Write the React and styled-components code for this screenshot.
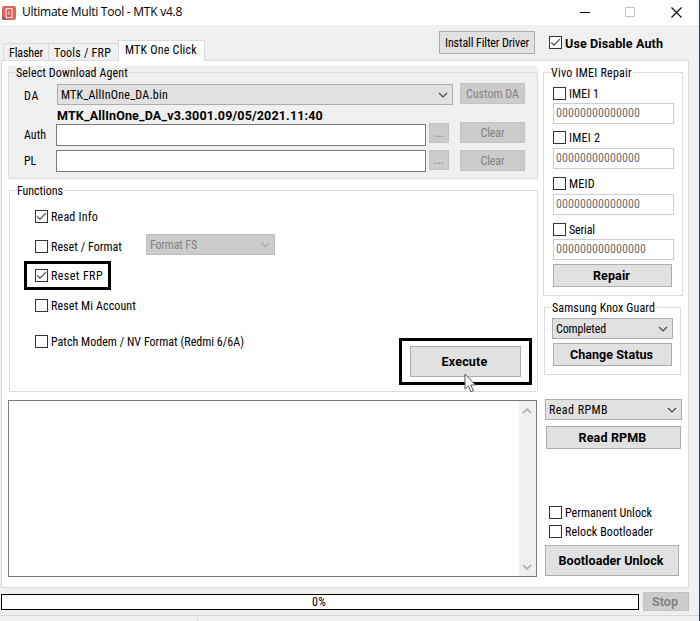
import React from 'react';
import styled, { createGlobalStyle, css } from 'styled-components';

const GlobalStyle = createGlobalStyle`
  * { box-sizing: border-box; }
  body { margin: 0; background: #f0f0f0; overflow: hidden; }
  button, input, fieldset { font: inherit; }
`;

const Window = styled.div`
  width: 700px;
  height: 621px;
  display: flex;
  flex-direction: column;
  overflow: hidden;
  background: #f0f0f0;
  border-right: 1px solid #1d4a63;
  font-family: "Roboto Condensed", Roboto, "Liberation Sans", sans-serif;
  font-size: 12px;
  line-height: 13px;
  color: #000;
  white-space: nowrap;
`;

const Text = styled.span`
  letter-spacing: ${(p) => p.$ls || 0}px;
  ${(p) => p.$bold && css`font-family: Roboto, "Liberation Sans", sans-serif; font-weight: 700; font-size: 12.5px;`}
`;

const TitleBar = styled.header`
  flex: none;
  height: 25px;
  display: flex;
  align-items: center;
  background: #fff;
  padding-left: 2px;
`;

const Title = styled.h1`
  flex: 1;
  margin: 0 0 1px 6px;
  font: 400 12px/16px "Open Sans", "Noto Sans", sans-serif;
  letter-spacing: -0.25px;
`;

const WindowControls = styled.div`
  display: flex;
  align-items: center;
  gap: 35px;
  padding-right: 17px;
  svg { display: block; }
`;

const HeaderRow = styled.div`
  flex: none;
  height: 36px;
  display: flex;
  align-items: flex-start;
`;

const Tabs = styled.nav`
  display: flex;
  align-items: flex-end;
  height: 36px;
  width: 439px;
  padding-left: 3px;
`;

const Tab = styled.div`
  position: relative;
  width: ${(p) => p.$width}px;
  height: ${(p) => (p.$active ? 21 : 18)}px;
  padding: ${(p) => (p.$active ? '3px 0 0 6px' : '3px 0 0 5px')};
  border: 1px solid #d9dcde;
  border-bottom: 0;
  margin-right: -1px;
  background: ${(p) => (p.$active ? '#fff' : '#f0f0f0')};
  z-index: ${(p) => (p.$active ? 2 : 0)};
`;

const Button = styled.button`
  flex: none;
  width: ${(p) => p.$width}px;
  height: ${(p) => p.$height || 23}px;
  margin: ${(p) => p.$margin || 0};
  padding: ${(p) => (p.$strong ? '0 2px 0 0' : '1px 0 0')};
  border: 1px solid #adadad;
  border-radius: 0;
  background: #e1e1e1;
  color: #000;
  line-height: 13px;
  text-align: center;
  &:disabled {
    background: #ccc;
    border-color: #c2c2c2;
    color: #838383;
  }
`;

const CheckLabel = styled.label`
  display: flex;
  align-items: center;
  height: 13px;
  gap: 3px;
  margin: ${(p) => p.$margin || 0};
  ${Text} { margin-top: 2px; }
`;

const CheckSquare = styled.span`
  flex: none;
  width: 13px;
  height: 13px;
  border: 1px solid #333;
  background: #fff;
  svg { display: block; }
`;

const Page = styled.main`
  position: relative;
  flex: none;
  display: flex;
  width: 688px;
  height: 528px;
  margin: -1px 0 0 1px;
  background: #fff;
  border: 1px solid #dcdcdc;
`;

const LeftColumn = styled.div`
  width: 541px;
  padding: 5px 0 0 6px;
  display: flex;
  flex-direction: column;
`;

const RightColumn = styled.div`
  width: 145px;
  padding-top: 5px;
`;

const Shade = styled.div`
  width: 530px;
  height: 113px;
  background: #f0f0f0;
`;

const Group = styled.fieldset`
  width: ${(p) => p.$width}px;
  height: ${(p) => p.$height}px;
  min-width: 0;
  margin: ${(p) => p.$margin || 0};
  padding: 0 0 0 7px;
  border: 1px solid #dcdcdc;
`;

const Legend = styled.legend`
  height: 13px;
  padding: 1px 1px 0 0;
`;

const AgentRow = styled.div`
  display: flex;
  align-items: flex-start;
  margin: ${(p) => p.$top}px 0 0 8px;
`;

const FieldName = styled.span`
  width: ${(p) => p.$width}px;
  padding-top: ${(p) => p.$drop || 5}px;
`;

const VersionLine = styled.div`
  height: 19px;
  padding: 4px 0 0 41px;
`;

const PathInput = styled.input`
  width: 370px;
  height: 22px;
  border: 1px solid #7a7a7a;
  background: #fff;
  border-radius: 0;
  outline: 0;
`;

const Combo = styled.div`
  flex: none;
  display: flex;
  align-items: center;
  justify-content: space-between;
  width: ${(p) => p.$width}px;
  height: 21px;
  margin: ${(p) => p.$margin || 0};
  padding: 1px 4px 0 3px;
  border: 1px solid ${(p) => (p.$disabled ? '#bfbfbf' : '#adadad')};
  background: ${(p) => (p.$disabled ? '#ccc' : '#e1e1e1')};
  color: ${(p) => (p.$disabled ? '#838383' : '#000')};
  svg { display: block; }
  ${Text} { margin-top: 1px; }
`;

const FunctionRow = styled.div`
  display: flex;
  align-items: center;
  height: 13px;
  margin: ${(p) => p.$top}px 0 0 18px;
`;

const Highlighted = styled.div`
  position: relative;
  width: ${(p) => p.$width}px;
  margin: ${(p) => p.$margin || 0};
`;

const HighlightFrame = styled.div`
  position: absolute;
  inset: -8px -11px;
  border: 3px solid #000;
  pointer-events: none;
`;

const Pointer = styled.svg`
  position: absolute;
  left: 54px;
  top: 27px;
`;

const Memo = styled.div`
  display: flex;
  justify-content: flex-end;
  width: 529px;
  height: 177px;
  margin-top: 8px;
  border: 1px solid #7a7a7a;
  background: #fff;
`;

const ScrollTrack = styled.div`
  width: 17px;
  display: flex;
  flex-direction: column;
  align-items: center;
  justify-content: space-between;
  padding: 7px 1px 6px 0;
  background: #f0f0f0;
  svg { display: block; }
`;

const IdInput = styled.div`
  width: 121px;
  height: 21px;
  margin: ${(p) => p.$top}px 0 0 2px;
  padding: 3px 0 0 2px;
  border: 1px solid #ccc;
  color: #6d6d6d;
`;

const Footer = styled.footer`
  flex: 1;
  display: flex;
  flex-direction: column;
`;

const ProgressRow = styled.div`
  display: flex;
  align-items: flex-start;
  gap: 4px;
  height: 27px;
  padding: 4px 0 0 1px;
`;

const Progress = styled.div`
  width: 638px;
  height: 16px;
  margin-top: 2px;
  padding-right: 2px;
  border: 1px solid #000;
  background: #fff;
  text-align: center;
  line-height: 15px;
`;

const StatusBar = styled.div`
  flex: 1;
  border-top: 1px solid #d7d7d7;
  padding-top: 2px;
`;

const StatusPanel = styled.div`
  width: 198px;
  height: 8px;
  border-right: 1px solid #d0d0d0;
`;

function Chevron({ up, color = '#444', width = 1.1 }) {
  return (
    <svg width="10" height="6" viewBox="0 0 10 6" fill="none" stroke={color} strokeWidth={width}>
      <path d={up ? 'M1 5 5 1 9 5' : 'M1 1 5 5 9 1'} />
    </svg>
  );
}

function Check({ label, ls, checked, bold, margin }) {
  return (
    <CheckLabel $margin={margin}>
      <CheckSquare>
        {checked && (
          <svg width="11" height="11" viewBox="0 0 11 11" fill="none" stroke="#444" strokeWidth="1.2">
            <path d="M1.2 5.3 4 8.2 9.9 2.2" />
          </svg>
        )}
      </CheckSquare>
      <Text $ls={ls} $bold={bold}>{label}</Text>
    </CheckLabel>
  );
}

function AppIcon() {
  return (
    <svg width="14" height="14" viewBox="0 0 14 14">
      <rect width="14" height="14" rx="2" fill="#dc6560" />
      <path d="M0 9 5 14H2a2 2 0 0 1-2-2z" fill="#a8504d" />
      <rect x="4.2" y="2.7" width="5.8" height="8.8" fill="#d9534f" stroke="#fbe3e0" strokeWidth="1.2" />
      <path d="M6.2 5h1.8v4H6.2z" fill="#eda39d" />
    </svg>
  );
}

const FUNCTIONS = {
  readInfo: { label: 'Read Info', ls: 0.21, checked: true },
  format: { label: 'Reset / Format', ls: 0.05 },
  frp: { label: 'Reset FRP', ls: 0.42, checked: true },
  mi: { label: 'Reset Mi Account', ls: 0.11 },
  modem: { label: 'Patch Modem / NV Format (Redmi 6/6A)', ls: 0.02 },
};

const IDENTIFIERS = [
  { label: 'IMEI 1', ls: 0.05, value: '00000000000000', top: 8, inputTop: 3 },
  { label: 'IMEI 2', ls: 0.22, value: '00000000000000', top: 7, inputTop: 4 },
  { label: 'MEID', ls: 0.28, value: '00000000000000', top: 8, inputTop: 4 },
  { label: 'Serial', ls: -0.13, value: '000000000000000', top: 8, inputTop: 3 },
];

export default function App() {
  return (
    <Window>
      <GlobalStyle />
      <TitleBar>
        <AppIcon />
        <Title>Ultimate Multi Tool - MTK v4.8</Title>
        <WindowControls>
          <svg width="11" height="11"><path d="M1 5.5h10" stroke="#000" /></svg>
          <svg width="11" height="11"><path d="M.5.5h9v9h-9z" stroke="#c4c4c4" fill="none" /></svg>
          <svg width="11" height="11"><path d="M.5.5l10 10m0-10l-10 10" stroke="#000" strokeWidth="1.1" /></svg>
        </WindowControls>
      </TitleBar>

      <HeaderRow>
        <Tabs>
          <Tab $width={46}><Text $ls={-0.12}>Flasher</Text></Tab>
          <Tab $width={71}><Text $ls={0.21}>Tools / FRP</Text></Tab>
          <Tab $width={87} $active><Text $ls={0.22}>MTK One Click</Text></Tab>
        </Tabs>
        <Button $width={96} $height={23} $margin="6px 0 0"><Text $ls={-0.11}>Install Filter Driver</Text></Button>
        <Check label="Use Disable Auth" ls={0.14} bold checked margin="11px 0 0 14px" />
      </HeaderRow>

      <Page>
        <LeftColumn>
          <Shade>
            <Group $width={530} $height={113}>
              <Legend><Text $ls={0.11}>Select Download Agent</Text></Legend>
              <AgentRow $top={5}>
                <FieldName $width={33} $drop={6}><Text $ls={0.68}>DA</Text></FieldName>
                <Combo $width={396}><Text $ls={0.23}>MTK_AllInOne_DA.bin</Text><Chevron /></Combo>
                <Button disabled $width={65} $height={21} $margin="-1px 0 0 7px"><Text>Custom DA</Text></Button>
              </AgentRow>
              <VersionLine><Text $bold $ls={0.16}>MTK_AllInOne_DA_v3.3001.09/05/2021.11:40</Text></VersionLine>
              <AgentRow $top={0}>
                <FieldName $width={32}><Text>Auth</Text></FieldName>
                <PathInput aria-label="Auth" />
                <Button disabled $width={20} $height={20} $margin="-1px 0 0 3px">...</Button>
                <Button disabled $width={65} $height={21} $margin="-2px 0 0 11px"><Text $ls={-0.12}>Clear</Text></Button>
              </AgentRow>
              <AgentRow $top={4}>
                <FieldName $width={32}><Text $ls={-0.18}>PL</Text></FieldName>
                <PathInput aria-label="PL" />
                <Button disabled $width={20} $height={20} $margin="0 0 0 3px">...</Button>
                <Button disabled $width={65} $height={21} $margin="0 0 0 11px"><Text $ls={-0.12}>Clear</Text></Button>
              </AgentRow>
            </Group>
          </Shade>

          <Group $width={529} $height={208} $margin="5px 0 0 1px">
            <Legend><Text $ls={-0.05}>Functions</Text></Legend>
            <FunctionRow $top={13}><Check {...FUNCTIONS.readInfo} /></FunctionRow>
            <FunctionRow $top={17}>
              <Check {...FUNCTIONS.format} />
              <Combo $disabled $width={129} $margin="-4px 0 0 24px">
                <Text $ls={-0.16}>Format FS</Text><Chevron color="#aaa" />
              </Combo>
            </FunctionRow>
            <FunctionRow $top={16}>
              <Highlighted $width={65}>
                <Check {...FUNCTIONS.frp} />
                <HighlightFrame />
              </Highlighted>
            </FunctionRow>
            <FunctionRow $top={17}><Check {...FUNCTIONS.mi} /></FunctionRow>
            <FunctionRow $top={23}><Check {...FUNCTIONS.modem} /></FunctionRow>
            <Highlighted $width={111} $margin="-2px 0 0 393px">
              <Button $strong $width={111} $height={31}><Text $bold $ls={0.21}>Execute</Text></Button>
              <HighlightFrame />
              <Pointer width="13" height="20" viewBox="0 0 13 20">
                <path d="M1 1v15l3.4-3.2 2.6 6 2.4-1-2.6-5.8h4.6z" fill="#fff" stroke="#555" strokeWidth="1" />
              </Pointer>
            </Highlighted>
          </Group>

          <Memo>
            <ScrollTrack>
              <Chevron up color="#b5b5b5" width={1.8} />
              <Chevron color="#b5b5b5" width={1.8} />
            </ScrollTrack>
          </Memo>
        </LeftColumn>

        <RightColumn>
          <Group $width={140} $height={230}>
            <Legend><Text $ls={0.24}>Vivo IMEI Repair</Text></Legend>
            {IDENTIFIERS.map((item) => (
              <React.Fragment key={item.label}>
                <Check label={item.label} ls={item.ls} margin={`${item.top}px 0 0 2px`} />
                <IdInput $top={item.inputTop}><Text $ls={0.08}>{item.value}</Text></IdInput>
              </React.Fragment>
            ))}
            <Button $strong $width={119} $height={23} $margin="4px 0 0 2px"><Text $bold $ls={0.11}>Repair</Text></Button>
          </Group>

          <Group $width={137} $height={74} $margin="5px 0 0 1px">
            <Legend><Text $ls={0.11}>Samsung Knox Guard</Text></Legend>
            <Combo $width={121} $margin="4px 0 0"><Text $ls={-0.14}>Completed</Text><Chevron /></Combo>
            <Button $strong $width={119} $height={23} $margin="4px 0 0 1px"><Text $bold $ls={0.07}>Change Status</Text></Button>
          </Group>

          <Combo $width={137} $margin="24px 0 0 2px"><Text $ls={0.44}>Read RPMB</Text><Chevron /></Combo>
          <Button $strong $width={135} $height={23} $margin="6px 0 0 3px"><Text $bold $ls={0.16}>Read RPMB</Text></Button>

          <Check label="Permanent Unlock" ls={0.03} margin="57px 0 0 6px" />
          <Check label="Relock Bootloader" ls={0.1} margin="6px 0 0 6px" />
          <Button $strong $width={134} $height={31} $margin="7px 0 0 2px"><Text $bold $ls={0.08}>Bootloader Unlock</Text></Button>
        </RightColumn>
      </Page>

      <Footer>
        <ProgressRow>
          <Progress><Text $ls={0.24}>0%</Text></Progress>
          <Button disabled $strong $width={46} $height={19}><Text $bold $ls={0.04}>Stop</Text></Button>
        </ProgressRow>
        <StatusBar><StatusPanel /></StatusBar>
      </Footer>
    </Window>
  );
}
